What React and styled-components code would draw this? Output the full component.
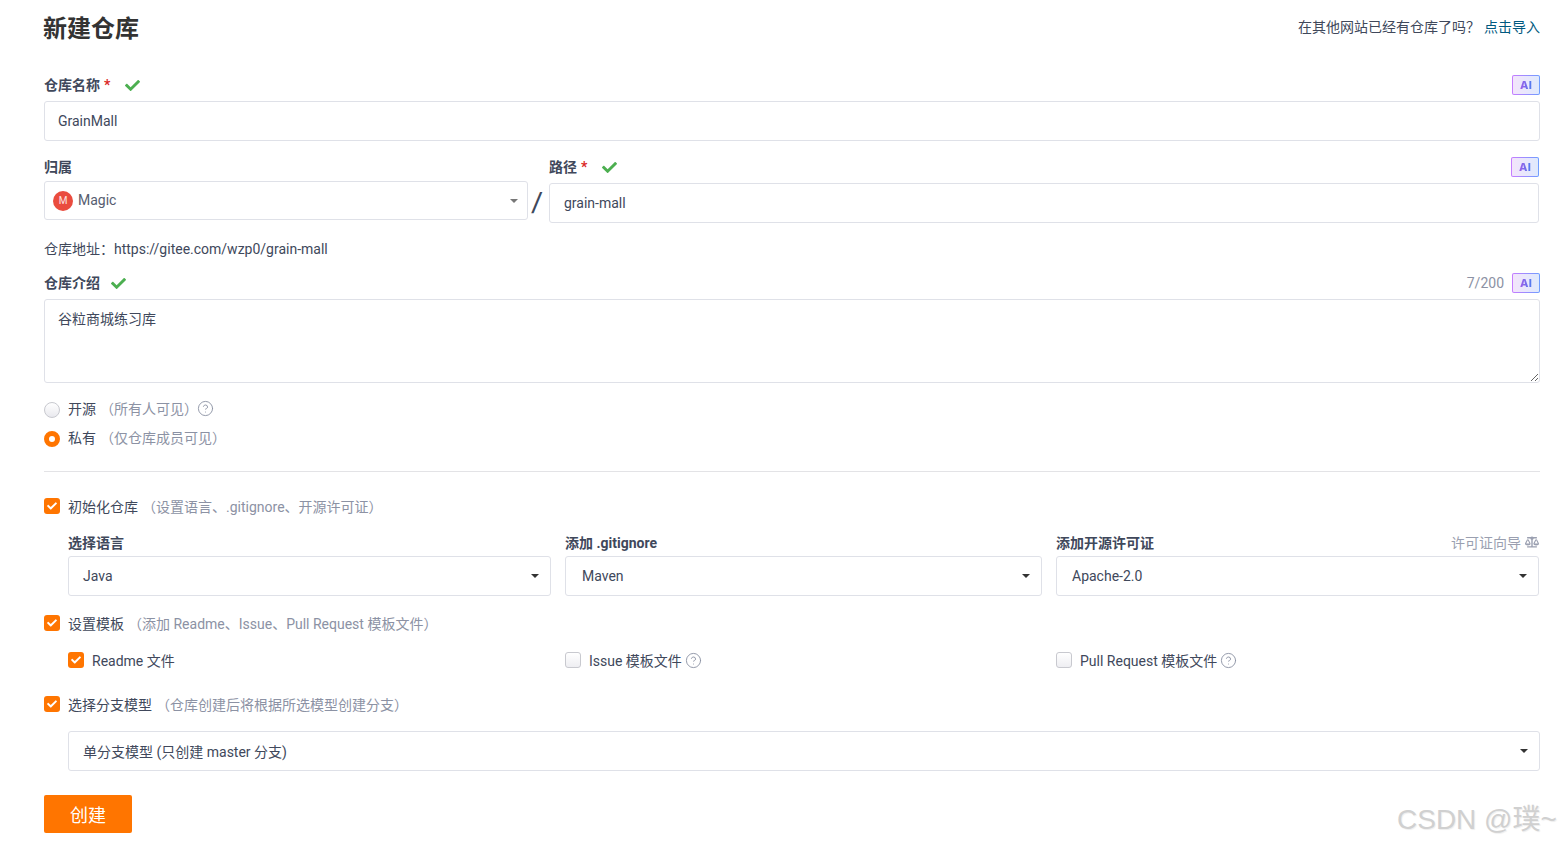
import React from "react";
import styled, { createGlobalStyle } from "styled-components";
import { FaCheck, FaBalanceScale } from "react-icons/fa";
import { CircleHelp } from "lucide-react";

const GlobalStyle = createGlobalStyle`
  html, body { margin: 0; padding: 0; background: #fff; }
  body {
    font-family: Roboto, "Noto Sans CJK SC", sans-serif;
    font-size: 14px;
    color: #40485b;
  }
  * { box-sizing: border-box; }
`;

const Page = styled.div`
  position: relative;
  height: 847px;
  padding: 0 22px 0 44px;
  overflow: hidden;
`;

const Header = styled.header`
  height: 56px;
  display: flex;
  align-items: center;
  justify-content: space-between;
`;

const Title = styled.h1`
  margin: 1px 0 0 -1px;
  font-size: 24px;
  font-weight: 700;
  color: #333;
  line-height: 32px;
`;

const HeaderNote = styled.div`
  font-size: 14px;
  color: #40485b;
  display: flex;
  gap: 4px;
  margin-top: -5px;
`;

const Link = styled.a`
  color: #005980;
`;

const LabelRow = styled.div`
  height: 20px;
  margin-top: ${(p) => p.$top || 0}px;
  margin-bottom: ${(p) => p.$bottom ?? 6}px;
  display: flex;
  align-items: center;
`;

const Label = styled.label`
  font-size: 14px;
  font-weight: 700;
  color: #40485b;
  line-height: 20px;
`;

const Star = styled.span`
  color: #db2828;
  margin-left: 4px;
  font-weight: 700;
`;

const Ok = styled(FaCheck)`
  color: #4caf50;
  font-size: 15px;
  margin-left: ${(p) => p.$left || 15}px;
`;

const Spacer = styled.div`
  flex: 1;
`;

const AiBadge = styled.span`
  width: 28px;
  height: 20px;
  border-radius: 2px;
  border: 1px solid transparent;
  background:
    linear-gradient(90deg, #f3e5fb, #dfe9fd) padding-box,
    linear-gradient(90deg, #c77dff, #6f9dff) border-box;
  display: flex;
  align-items: center;
  justify-content: center;
  flex: none;
`;

const AiText = styled.span`
  font-family: "Inter", sans-serif;
  font-size: 11px;
  font-weight: 800;
  letter-spacing: 0.3px;
  background: linear-gradient(90deg, #a15ce8, #4d7df0);
  -webkit-background-clip: text;
  background-clip: text;
  color: transparent;
`;

const TextInput = styled.input`
  display: block;
  width: 100%;
  height: 40px;
  padding: 0 ${(p) => p.$pad || 14}px;
  border: 1px solid #dfe1e8;
  border-radius: 3px;
  background: #fff;
  font: inherit;
  color: #40485b;
  outline: none;
`;

const OwnerGrid = styled.div`
  margin-top: 16px;
  display: grid;
  grid-template-columns: 484px 21px 990px;
`;

const Slash = styled.div`
  height: 39px;
  margin-top: 24px;
  font-family: "Liberation Sans", sans-serif;
  font-size: 29px;
  font-weight: 400;
  color: #40485b;
  text-align: center;
  line-height: 44px;
  padding-right: 3px;
  transform: skewX(-8deg);
`;

const Select = styled.div`
  height: ${(p) => p.$height || 40}px;
  display: flex;
  align-items: center;
  padding: 0 11px 0 ${(p) => p.$pad || 15}px;
  border: 1px solid #dfe1e8;
  border-radius: 3px;
  background: #fff;
  color: #40485b;
`;

const OwnerSelect = styled(Select)`
  padding: 0 9px 0 4px;
  color: #565d70;
`;

const OwnerName = styled.span`
  margin-top: -2px;
`;

const Avatar = styled.span`
  width: 20px;
  height: 20px;
  border-radius: 50%;
  background: #ea4c3e;
  color: #fde4e1;
  font-size: 10px;
  display: flex;
  align-items: center;
  justify-content: center;
  margin-right: 5px;
  margin-left: 4px;
`;

const Caret = styled.span`
  margin-left: auto;
  width: 0;
  height: 0;
  border-left: 4px solid transparent;
  border-right: 4px solid transparent;
  border-top: 4px solid ${(p) => p.$color || "#333"};
`;

const Address = styled.div`
  margin-top: 16px;
  height: 20px;
  line-height: 20px;
  color: #40485b;
`;

const Counter = styled.span`
  color: #8c92a4;
  margin-right: 8px;
`;

const TextArea = styled.textarea`
  display: block;
  width: 100%;
  height: 84px;
  padding: 9px 13px;
  border: 1px solid #dfe1e8;
  border-radius: 3px;
  font: inherit;
  line-height: 20px;
  color: #40485b;
  outline: none;
  resize: vertical;
`;

const OptionRow = styled.div`
  height: 20px;
  margin-top: ${(p) => p.$top || 0}px;
  display: flex;
  align-items: center;
  line-height: 20px;
`;

const Radio = styled.span`
  width: 16px;
  height: 16px;
  margin-top: 2px;
  border-radius: 50%;
  flex: none;
  margin-right: 8px;
  background: ${(p) => (p.$on ? "#fff" : "linear-gradient(#fff, #e9e9ee)")};
  border: ${(p) => (p.$on ? "5px solid #ff7500" : "1px solid #c8c9cf")};
`;

const Box = styled.span`
  width: 16px;
  height: 16px;
  margin-top: -2px;
  border-radius: 3px;
  flex: none;
  margin-right: 8px;
  display: flex;
  align-items: center;
  justify-content: center;
  color: #fff;
  font-size: 10px;
  background: ${(p) => (p.$on ? "#ff7500" : "linear-gradient(#fff, #eeeef2)")};
  border: ${(p) => (p.$on ? "none" : "1px solid #c8c9cf")};
`;

const Hint = styled.span`
  color: #8c92a4;
  margin-left: 4px;
`;

const HelpIcon = styled(CircleHelp)`
  width: 17px;
  height: 17px;
  color: #8c92a4;
  stroke-width: 1.3;
  margin-left: ${(p) => p.$left ?? 3}px;
  margin-top: -2px;
`;

const Divider = styled.hr`
  margin: 23px 0 0;
  border: none;
  border-top: 1px solid #e3e3e6;
  height: 0;
`;

const ThreeCols = styled.div`
  margin-top: ${(p) => p.$top || 0}px;
  margin-left: 24px;
  display: grid;
  grid-template-columns: 483px 477px 483px;
  column-gap: 14px;
`;

const Guide = styled.span`
  color: #9a9fb0;
  margin-left: auto;
  margin-top: -2px;
  display: flex;
  align-items: center;
  gap: 4px;
`;

const ScaleIcon = styled(FaBalanceScale)`
  font-size: 14px;
`;

const BranchSelect = styled(Select)`
  margin: 16px 0 0 24px;
`;

const CreateButton = styled.button`
  display: block;
  margin-top: 24px;
  width: 88px;
  height: 38px;
  border: none;
  border-radius: 2px;
  background: #ff7500;
  color: #fff;
  font: inherit;
  font-size: 18px;
`;

const Watermark = styled.div`
  position: absolute;
  left: 1397px;
  top: 800px;
  font-family: "Liberation Sans", "Noto Sans CJK SC", sans-serif;
  font-size: 28px;
  line-height: 40px;
  color: #d0d0d0;
  text-shadow: 1px 1px 1px #eee;
  white-space: nowrap;
`;

function Ai() {
  return (
    <AiBadge>
      <AiText>AI</AiText>
    </AiBadge>
  );
}

export default function App() {
  return (
    <Page>
      <GlobalStyle />
      <Header>
        <Title>新建仓库</Title>
        <HeaderNote>
          <span>在其他网站已经有仓库了吗？</span>
          <Link>点击导入</Link>
        </HeaderNote>
      </Header>

      <LabelRow $top={19}>
        <Label>仓库名称<Star>*</Star></Label>
        <Ok />
        <Spacer />
        <Ai />
      </LabelRow>
      <TextInput $pad={13} defaultValue="GrainMall" />

      <OwnerGrid>
        <div>
          <LabelRow $bottom={4}>
            <Label>归属</Label>
          </LabelRow>
          <OwnerSelect $height={39}>
            <Avatar>M</Avatar>
            <OwnerName>Magic</OwnerName>
            <Caret $color="#777" />
          </OwnerSelect>
        </div>
        <Slash>/</Slash>
        <div>
          <LabelRow>
            <Label>路径<Star>*</Star></Label>
            <Ok />
            <Spacer />
            <Ai />
          </LabelRow>
          <TextInput defaultValue="grain-mall" />
        </div>
      </OwnerGrid>

      <Address>仓库地址：https://gitee.com/wzp0/grain-mall</Address>

      <LabelRow $top={14}>
        <Label>仓库介绍</Label>
        <Ok $left={11} />
        <Spacer />
        <Counter>7/200</Counter>
        <Ai />
      </LabelRow>
      <TextArea defaultValue="谷粒商城练习库" />

      <OptionRow $top={16}>
        <Radio />
        开源
        <Hint>（所有人可见）</Hint>
        <HelpIcon $left={-1} />
      </OptionRow>
      <OptionRow $top={9}>
        <Radio $on />
        私有
        <Hint>（仅仓库成员可见）</Hint>
      </OptionRow>

      <Divider />

      <OptionRow $top={25}>
        <Box $on><FaCheck /></Box>
        初始化仓库
        <Hint>（设置语言、.gitignore、开源许可证）</Hint>
      </OptionRow>

      <ThreeCols $top={16}>
        <div>
          <LabelRow $bottom={3}><Label>选择语言</Label></LabelRow>
          <Select $pad={14}>Java<Caret /></Select>
        </div>
        <div>
          <LabelRow $bottom={3}><Label>添加 .gitignore</Label></LabelRow>
          <Select $pad={16}>Maven<Caret /></Select>
        </div>
        <div>
          <LabelRow $bottom={3}>
            <Label>添加开源许可证</Label>
            <Guide>许可证向导<ScaleIcon /></Guide>
          </LabelRow>
          <Select>Apache-2.0<Caret /></Select>
        </div>
      </ThreeCols>

      <OptionRow $top={18}>
        <Box $on><FaCheck /></Box>
        设置模板
        <Hint>（添加 Readme、Issue、Pull Request 模板文件）</Hint>
      </OptionRow>

      <ThreeCols $top={17}>
        <OptionRow>
          <Box $on><FaCheck /></Box>
          Readme 文件
        </OptionRow>
        <OptionRow>
          <Box />
          Issue 模板文件
          <HelpIcon />
        </OptionRow>
        <OptionRow>
          <Box />
          Pull Request 模板文件
          <HelpIcon />
        </OptionRow>
      </ThreeCols>

      <OptionRow $top={24}>
        <Box $on><FaCheck /></Box>
        选择分支模型
        <Hint>（仓库创建后将根据所选模型创建分支）</Hint>
      </OptionRow>
      <BranchSelect $pad={14}>
        单分支模型 (只创建 master 分支)
        <Caret />
      </BranchSelect>

      <CreateButton>创建</CreateButton>

      <Watermark>CSDN @璞~</Watermark>
    </Page>
  );
}
